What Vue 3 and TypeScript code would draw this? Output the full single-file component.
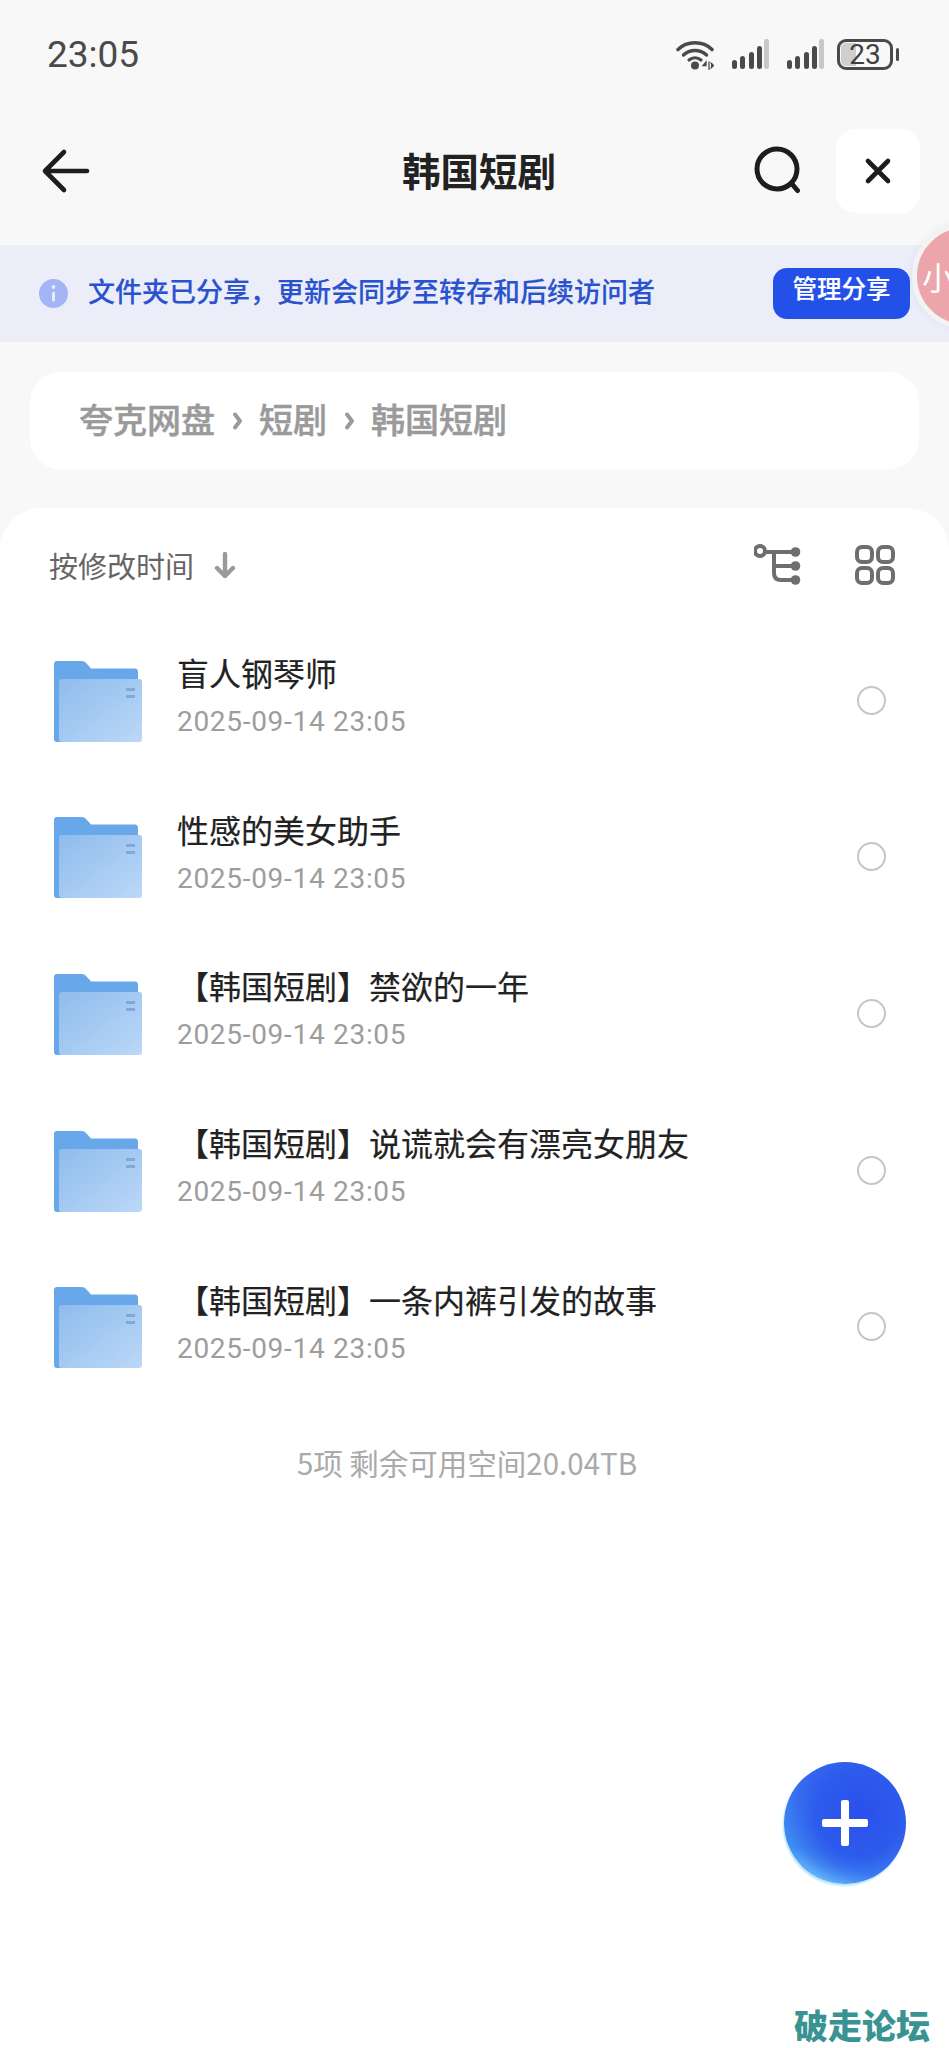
<script setup lang="ts">
const rows: string[] = [
  '盲人钢琴师',
  '性感的美女助手',
  '【韩国短剧】禁欲的一年',
  '【韩国短剧】说谎就会有漂亮女朋友',
  '【韩国短剧】一条内裤引发的故事',
]
const crumbs: string[] = ['夸克网盘', '短剧', '韩国短剧']
</script>

<template>
  <div class="screen">
    <div class="status">
      <span class="time">23:05</span>
      <div class="status-icons">
        <svg width="38" height="31" viewBox="0 0 38 31" fill="none" stroke="#4a4a4a" stroke-linecap="round">
          <path d="M2 10.5C11 1.5 27 1.5 36 10.5" stroke-width="3.6" />
          <path d="M7.5 16C14 10 24 10 30.5 16" stroke-width="3.4" />
          <path d="M13 21C16.500 18 21.500 18 25 21" stroke-width="3.2" />
          <circle cx="19" cy="26.500" r="4" fill="#4a4a4a" stroke="none" />
          <path d="M30 23l-3 3.500h3zM33 23v8M35 24l2.500 2.500L35 29" stroke-width="1.300" fill="#4a4a4a" />
        </svg>
        <svg v-for="n in 2" :key="n" class="signal" width="37" height="30" viewBox="0 0 37 30">
          <rect x="0" y="21" width="5" height="9" rx="2.500" fill="#4a4a4a" />
          <rect x="8" y="17" width="5" height="13" rx="2.500" fill="#4a4a4a" />
          <rect x="17" y="13" width="5" height="17" rx="2.500" fill="#4a4a4a" />
          <rect x="25" y="7" width="5" height="23" rx="2.500" fill="#4a4a4a" />
          <rect x="32" y="0" width="5" height="30" rx="2" fill="#c8c8c8" />
        </svg>
        <div class="battery">
          <div class="battery-fill"></div>
          <span class="battery-num">23</span>
          <i class="battery-nub"></i>
        </div>
      </div>
    </div>

    <div class="nav">
      <svg class="back" width="56" height="48" viewBox="0 0 56 48" fill="none" stroke="#1d1d1d" stroke-width="4.600" stroke-linecap="round" stroke-linejoin="round">
        <path d="M26 5L7 24L26 43M7.500 24H49" />
      </svg>
      <h1 class="title">韩国短剧</h1>
      <div class="nav-actions">
        <svg width="50" height="50" viewBox="0 0 50 50" fill="none" stroke="#1d1d1d" stroke-width="5" stroke-linecap="round">
          <circle cx="26" cy="23" r="20" />
          <path d="M41 38L46.500 44.500" />
        </svg>
        <div class="close">
          <svg width="30" height="30" viewBox="0 0 30 30" fill="none" stroke="#1d1d1d" stroke-width="4.600" stroke-linecap="round">
            <path d="M5 5L25 25M25 5L5 25" />
          </svg>
        </div>
      </div>
    </div>

    <div class="banner">
      <div class="banner-left">
        <svg width="29" height="29" viewBox="0 0 29 29">
          <circle cx="14.500" cy="14.500" r="14.500" fill="#a3b5f4" />
          <rect x="13" y="12.500" width="3" height="10" rx="1.500" fill="#e9edfb" />
          <circle cx="14.500" cy="8" r="1.900" fill="#e9edfb" />
        </svg>
        <span class="banner-text">文件夹已分享，更新会同步至转存和后续访问者</span>
      </div>
      <div class="manage">管理分享</div>
    </div>

    <div class="crumbs">
      <template v-for="(c, i) in crumbs" :key="c">
        <svg v-if="i > 0" class="chev" width="11" height="22" viewBox="0 0 11 22" fill="none" stroke="#9a9a9a" stroke-width="4" stroke-linecap="round" stroke-linejoin="round">
          <path d="M3 4.500L8 11L3 17.500" />
        </svg>
        <span class="crumb">{{ c }}</span>
      </template>
    </div>

    <div class="sheet">
      <div class="sort">
        <div class="sort-left">
          <span>按修改时间</span>
          <svg width="26" height="28" viewBox="0 0 26 28" fill="none" stroke="#9a9a9a" stroke-width="4.400" stroke-linecap="round" stroke-linejoin="round">
            <path d="M13 3V25M5 17L13 25L21 17" />
          </svg>
        </div>
        <div class="sort-right">
          <svg width="48" height="42" viewBox="0 0 48 42" fill="none" stroke="#6e6e6e" stroke-width="4" stroke-linecap="round">
            <circle cx="6" cy="7" r="5" />
            <path d="M11.500 8H40M20 8V29Q20 36 27 36H40M20 22H40" />
            <circle cx="41.500" cy="8" r="4.800" fill="#6e6e6e" stroke="none" />
            <circle cx="41.500" cy="22" r="4.800" fill="#6e6e6e" stroke="none" />
            <circle cx="41.500" cy="36" r="4.800" fill="#6e6e6e" stroke="none" />
          </svg>
          <svg width="40" height="40" viewBox="0 0 40 40" fill="none" stroke="#6e6e6e" stroke-width="4">
            <rect x="2" y="2" width="15" height="15" rx="5" />
            <rect x="23" y="2" width="15" height="15" rx="5" />
            <rect x="2" y="23" width="15" height="15" rx="5" />
            <rect x="23" y="23" width="15" height="15" rx="5" />
          </svg>
        </div>
      </div>

      <div v-for="(name, i) in rows" :key="name" class="row">
        <svg class="folder" width="88" height="81" viewBox="0 0 88 81">
          <defs>
            <linearGradient :id="'front' + i" x1="0" y1="0" x2="1" y2="1">
              <stop offset="0" stop-color="#8fbcec" />
              <stop offset="1" stop-color="#bbd8f8" />
            </linearGradient>
          </defs>
          <path d="M3 0H28Q31 0 33 3L37 7.500H81Q84 7.500 84 11V78Q84 81 81 81H3Q0 81 0 78V3Q0 0 3 0Z" fill="#68a8ea" />
          <path d="M8 18H85Q88 18 88 21V78Q88 81 85 81H8Q5 81 5 78V21Q5 18 8 18Z" :fill="'url(#front' + i + ')'" />
          <rect x="72" y="27" width="9" height="3" fill="#7fa9d8" />
          <rect x="72" y="34" width="9" height="3" fill="#7fa9d8" />
        </svg>
        <div class="row-text">
          <div class="row-title">{{ name }}</div>
          <div class="row-date">2025-09-14 23:05</div>
        </div>
        <span class="radio"></span>
      </div>

      <div class="footer">5项 剩余可用空间20.04TB</div>
    </div>

    <div class="avatar"><span>小</span></div>
    <div class="fab">
      <svg width="48" height="48" viewBox="0 0 48 48" fill="#fff">
        <rect x="20" y="1" width="8" height="46" rx="2" />
        <rect x="1" y="20" width="46" height="8" rx="2" />
      </svg>
    </div>
    <div class="mark">破走论坛</div>
  </div>
</template>

<style>
html, body { margin: 0; background: #fff; }
</style>

<style scoped>
.screen {
  position: relative;
  width: 949px;
  height: 2048px;
  overflow: hidden;
  display: flex;
  flex-direction: column;
  background: #f8f8f8;
  font-family: "Noto Sans CJK SC", "Noto Sans", sans-serif;
}
.status {
  height: 129px;
  box-sizing: border-box;
  padding: 31px 56px 0 47px;
  display: flex;
  justify-content: space-between;
  align-items: flex-start;
}
.time {
  font: 400 37px/48px Roboto, sans-serif;
  color: #4a4a4a;
}
.status-icons {
  display: flex;
  align-items: flex-start;
  padding-top: 8px;
  gap: 18px;
}
.battery {
  position: relative;
  width: 56px;
  height: 31px;
  box-sizing: border-box;
  border: 3px solid #4a4a4a;
  border-radius: 9px;
  margin-left: -5px;
  display: flex;
  align-items: center;
  justify-content: center;
}
.battery-fill {
  position: absolute;
  left: 1px;
  top: 1px;
  bottom: 1px;
  width: 15px;
  background: #cfcfcf;
  border-radius: 5px 0 0 5px;
}
.battery-num {
  position: relative;
  font: 400 28px/25px Roboto, sans-serif;
  color: #3f3f3f;
}
.battery-nub {
  position: absolute;
  right: -9px;
  top: 6px;
  width: 3px;
  height: 13px;
  border-radius: 2px;
  background: #4a4a4a;
}
.nav {
  height: 84px;
  padding: 0 29px 0 38px;
  display: grid;
  grid-template-columns: 1fr auto 1fr;
  align-items: center;
}
.title {
  margin: 0 0 4px;
  font-size: 38.500px;
  line-height: 50px;
  font-weight: 700;
  color: #222;
}
.nav-actions {
  display: flex;
  align-items: center;
  justify-content: flex-end;
  gap: 35px;
}
.close {
  width: 84px;
  height: 84px;
  border-radius: 20px;
  background: #fff;
  display: flex;
  align-items: center;
  justify-content: center;
}
.banner {
  margin-top: 32px;
  height: 97px;
  box-sizing: border-box;
  padding: 0 39px 0 39px;
  background: #ebeef8;
  display: flex;
  align-items: center;
  justify-content: space-between;
}
.banner-left {
  display: flex;
  align-items: center;
  gap: 20px;
}
.banner-text {
  padding-bottom: 5px;
  font-size: 27px;
  line-height: 40px;
  font-weight: 500;
  color: #2a52cf;
  -webkit-text-stroke: 0.15px #2a52cf;
}
.manage {
  width: 137px;
  height: 51px;
  border-radius: 14px;
  background: #2450ea;
  color: #fff;
  font-size: 24.500px;
  font-weight: 500;
  line-height: 39px;
  text-align: center;
  -webkit-text-stroke: 0.15px #fff;
}
.crumbs {
  margin: 30px 30px 0;
  height: 97px;
  box-sizing: border-box;
  padding-left: 49px;
  border-radius: 30px;
  background: #fff;
  display: flex;
  align-items: center;
  gap: 16.500px;
  font-size: 34px;
  font-weight: 500;
  color: #9a9a9a;
}
.crumb {
  padding-bottom: 5px;
  -webkit-text-stroke: 0.5px #9a9a9a;
}
.sheet {
  margin-top: 39px;
  flex: 1;
  background: #fff;
  border-radius: 42px 42px 0 0;
}
.sort {
  height: 114px;
  box-sizing: border-box;
  padding: 0 54px 0 49px;
  display: flex;
  align-items: center;
  justify-content: space-between;
}
.sort-left {
  display: flex;
  align-items: center;
  gap: 18px;
  font-size: 29px;
  color: #666;
}
.sort-right {
  display: flex;
  align-items: center;
  gap: 53px;
}
.row {
  height: 156.600px;
  box-sizing: border-box;
  padding: 0 63px 0 54px;
  display: flex;
  align-items: center;
  gap: 35px;
}
.folder {
  margin-top: 2px;
}
.row-text {
  flex: 1;
  padding-bottom: 8px;
}
.row-title {
  font-size: 32px;
  line-height: 44px;
  color: #222;
  -webkit-text-stroke: 0.2px #222;
}
.row-date {
  margin-top: 8px;
  font: 400 28px/40px Roboto, sans-serif;
  letter-spacing: 0.7px;
  color: #9d9d9d;
}
.radio {
  width: 29px;
  height: 29px;
  box-sizing: border-box;
  border: 2.500px solid #c6c6c6;
  border-radius: 50%;
}
.footer {
  margin-top: 33px;
  padding-right: 15px;
  text-align: center;
  font-size: 29.500px;
  line-height: 48px;
  color: #aaa;
}
.avatar {
  position: absolute;
  left: 912px;
  top: 223px;
  width: 106px;
  height: 106px;
  box-sizing: border-box;
  border: 5px solid #f3f3f5;
  border-radius: 50%;
  background: #eba5ab;
  box-shadow: 0 0 8px rgba(0, 0, 0, 0.05);
  display: flex;
  align-items: center;
  padding-left: 5px;
  color: #fff;
  font-size: 32px;
}
.fab {
  position: absolute;
  left: 784px;
  top: 1762px;
  width: 122px;
  height: 122px;
  border-radius: 50%;
  box-shadow: -1px 2px 2px #b4e4fb;
  background:
    radial-gradient(circle at 62% 42%, #2a50ec 0%, #2d5bec 42%, rgba(45, 91, 236, 0) 72%),
    linear-gradient(200deg, #3a6cf0 30%, #3f8cf2 75%, #7fd0fc 100%);
  display: flex;
  align-items: center;
  justify-content: center;
}
.mark {
  position: absolute;
  left: 794px;
  top: 2005px;
  font-size: 34px;
  line-height: 40px;
  font-weight: 900;
  color: #3a9393;
}
</style>
